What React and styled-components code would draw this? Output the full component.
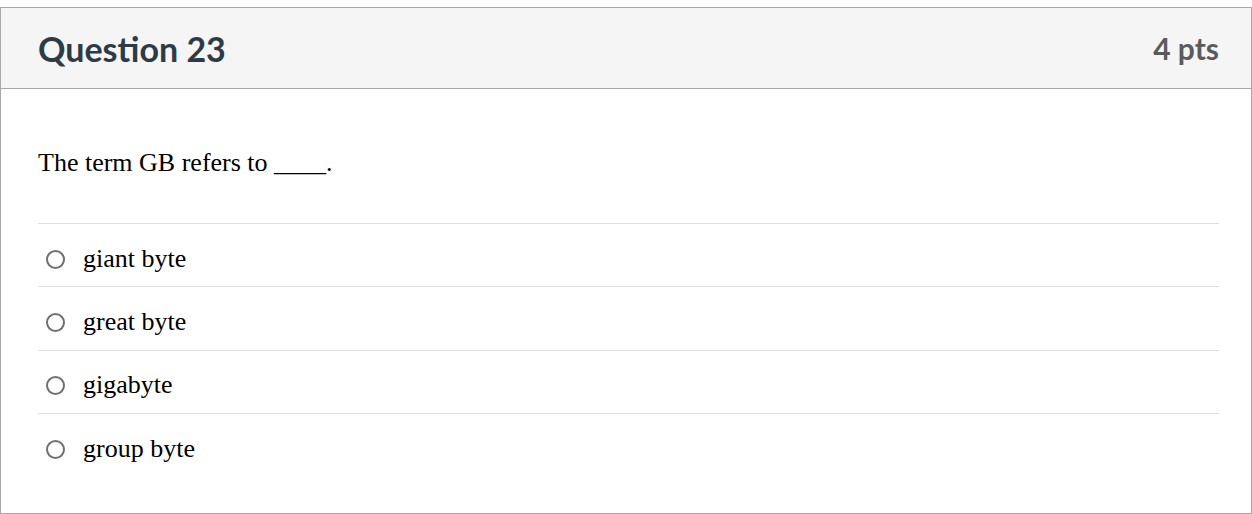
import React from "react";
import styled, { createGlobalStyle } from "styled-components";

const Global = createGlobalStyle`
  html, body { margin: 0; padding: 0; background: #fff; }
  body { font-family: "Liberation Serif", "Times New Roman", serif; }
`;

const Page = styled.div`
  padding-top: 7px;
`;

const Card = styled.section`
  border: 1px solid #a9a9a9;
  height: 507px;
  box-sizing: border-box;
  display: flex;
  flex-direction: column;
`;

const Header = styled.header`
  height: 80px;
  background: #f5f5f5;
  border-bottom: 1px solid #a9a9a9;
  display: flex;
  align-items: center;
  justify-content: space-between;
  padding: 0 32px 0 37px;
  flex-shrink: 0;
`;

const Title = styled.h2`
  margin: 0;
  font-family: Lato, "Liberation Sans", sans-serif;
  font-weight: 700;
  font-size: 34px;
  color: #2d3b45;
`;

const Points = styled.div`
  font-family: Lato, "Liberation Sans", sans-serif;
  font-weight: 700;
  font-size: 30px;
  color: #5b5b5b;
`;

const Body = styled.div`
  padding: 59px 32px 0 37px;
`;

const Prompt = styled.p`
  margin: 0 0 45px;
  font-size: 26px;
  line-height: 30px;
  color: #000;
`;

const Answers = styled.div`
  display: flex;
  flex-direction: column;
`;

const Row = styled.label`
  display: flex;
  align-items: center;
  box-sizing: border-box;
  height: 63.33px;
  border-top: 1px solid #dedede;
  padding: 7px 0 0 8px;
  font-size: 26px;
  color: #000;
`;

const Radio = styled.span`
  box-sizing: border-box;
  width: 19px;
  height: 19px;
  border: 2px solid #707070;
  border-radius: 50%;
  margin-right: 18px;
  margin-top: 1px;
  flex-shrink: 0;
`;

const answers = ["giant byte", "great byte", "gigabyte", "group byte"];

export default function App() {
  return (
    <Page>
      <Global />
      <Card>
        <Header>
          <Title>Question 23</Title>
          <Points>4 pts</Points>
        </Header>
        <Body>
          <Prompt>The term GB refers to ____.</Prompt>
          <Answers>
            {answers.map((a) => (
              <Row key={a}>
                <Radio />
                {a}
              </Row>
            ))}
          </Answers>
        </Body>
      </Card>
    </Page>
  );
}
